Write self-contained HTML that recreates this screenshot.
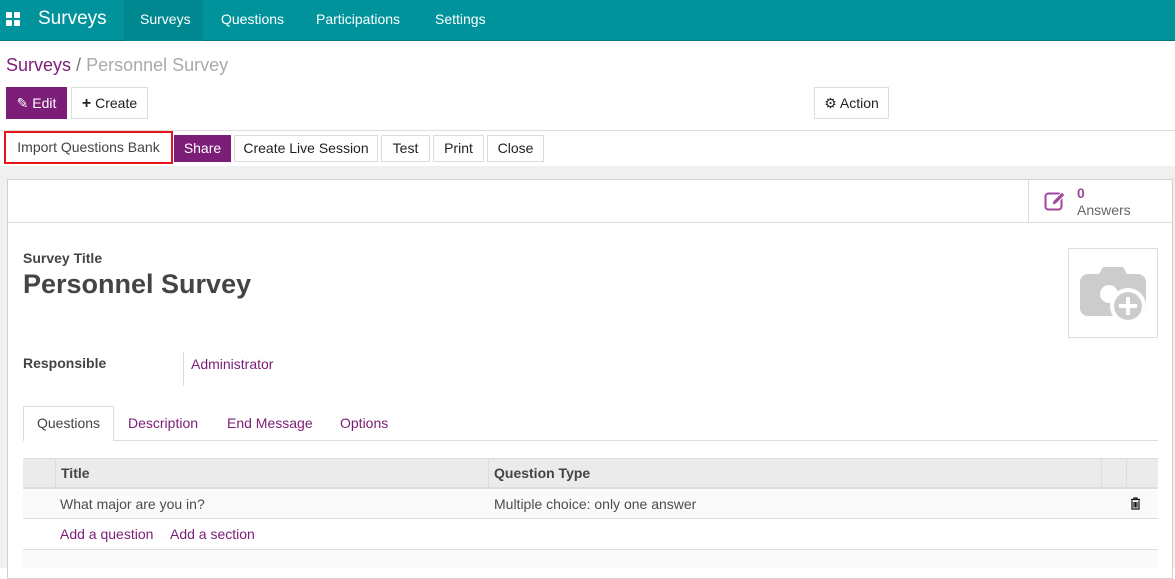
<!DOCTYPE html>
<html><head><meta charset="utf-8"><style>
*{box-sizing:border-box;margin:0;padding:0}
body{width:1175px;height:568px;overflow:hidden;font-family:"Liberation Sans",sans-serif;font-size:14px;color:#4c4c4c;background:#fff;position:relative}
.nav{position:absolute;left:0;top:0;width:1175px;height:41px;background:#00939b;border-bottom:1px solid #00777e;color:#fff}
.nav span{position:absolute;top:0;line-height:38px;font-size:14px}
.abs{position:absolute}
.btn{position:absolute;border:1px solid #dcdcdc;background:#fff;color:#222;font-size:14px;text-align:center;line-height:30px;height:32px}
.pbtn{background:#7c1d77;color:#fff;border-color:#7c1d77}
.purple{color:#7c1d77}
</style></head><body>
<div class="nav">
 <div class="abs" style="left:6px;top:12px;width:6px;height:6px;background:#fff;border-radius:1px"></div>
 <div class="abs" style="left:14px;top:12px;width:6px;height:6px;background:#fff;border-radius:1px"></div>
 <div class="abs" style="left:6px;top:20px;width:6px;height:6px;background:#fff;border-radius:1px"></div>
 <div class="abs" style="left:14px;top:20px;width:6px;height:6px;background:#fff;border-radius:1px"></div>
 <span style="left:38px;font-size:19px">Surveys</span>
 <div class="abs" style="left:124px;top:0;width:79px;height:41px;background:#008890"></div>
 <span style="left:140px">Surveys</span>
 <span style="left:221px">Questions</span>
 <span style="left:316px">Participations</span>
 <span style="left:435px">Settings</span>
</div>
<div class="abs" style="left:6px;top:55px;font-size:18px"><span class="purple">Surveys</span> <span style="color:#777">/</span> <span style="color:#aaa">Personnel Survey</span></div>
<div class="btn pbtn" style="left:6px;top:87px;width:61px">✎ Edit</div>
<div class="btn" style="left:71px;top:87px;width:77px"><b style="font-size:16px">+</b> Create</div>
<div class="btn" style="left:814px;top:87px;width:75px">⚙ Action</div>
<div class="abs" style="left:0;top:130px;width:1175px;height:1px;background:#ddd"></div>
<div class="btn" style="left:4px;top:131px;width:169px;border:2px solid #e8141b;height:33px;line-height:29px;color:#444">Import Questions Bank</div>
<div class="btn pbtn" style="left:174px;top:135px;width:57px;height:27px;line-height:25px">Share</div>
<div class="btn" style="left:234px;top:135px;width:144px;height:27px;line-height:25px">Create Live Session</div>
<div class="btn" style="left:381px;top:135px;width:49px;height:27px;line-height:25px">Test</div>
<div class="btn" style="left:433px;top:135px;width:51px;height:27px;line-height:25px">Print</div>
<div class="btn" style="left:487px;top:135px;width:57px;height:27px;line-height:25px">Close</div>
<div class="abs" style="left:0;top:166px;width:1175px;height:402px;background:#f0f0f0"></div>
<div class="abs" style="left:7px;top:179px;width:1166px;height:400px;background:#fff;border:1px solid #d0d0d0"></div>
<div class="abs" style="left:8px;top:222px;width:1164px;height:1px;background:#ddd"></div>
<div class="abs" style="left:1028px;top:180px;width:1px;height:42px;background:#ddd"></div>
<svg class="abs" style="left:1044px;top:190px" width="24" height="22" viewBox="0 0 24 22"><rect x="1.5" y="3.5" width="16" height="16" rx="3" fill="none" stroke="#a0469c" stroke-width="2"/><path d="M8 15l1-4 9-9 3 3-9 9z" fill="#a0469c" stroke="#fff" stroke-width="1"/></svg>
<div class="abs" style="left:1077px;top:185px;font-size:14px;font-weight:bold;color:#a0469c">0</div>
<div class="abs" style="left:1077px;top:202px;font-size:14px;color:#666">Answers</div>
<div class="abs" style="left:23px;top:250px;font-size:14px;font-weight:bold;color:#444">Survey Title</div>
<div class="abs" style="left:23px;top:269px;font-size:27px;font-weight:bold;color:#444">Personnel Survey</div>
<div class="abs" style="left:1068px;top:248px;width:90px;height:90px;border:1px solid #ddd"></div>
<svg class="abs" style="left:1078px;top:264px" width="70" height="62" viewBox="0 0 70 62"><rect x="2" y="10" width="66" height="42" rx="8" fill="#ccc"/><path d="M20 12l5-9h20l5 9z" fill="#ccc"/><circle cx="31" cy="30" r="9" fill="#fff"/><circle cx="50" cy="42" r="18" fill="#fff"/><circle cx="50" cy="42" r="14" fill="#ccc"/><path d="M50 33v18M41 42h18" stroke="#fff" stroke-width="4"/></svg>
<div class="abs" style="left:23px;top:355px;font-weight:bold;color:#444">Responsible</div>
<div class="abs" style="left:183px;top:352px;width:1px;height:34px;background:#ddd"></div>
<div class="abs purple" style="left:191px;top:356px">Administrator</div>
<div class="abs" style="left:23px;top:440px;width:1135px;height:1px;background:#ddd"></div>
<div class="abs" style="left:23px;top:406px;width:91px;height:35px;background:#fff;border:1px solid #ddd;border-bottom:none"></div>
<div class="abs" style="left:37px;top:415px;color:#444">Questions</div>
<div class="abs purple" style="left:128px;top:415px">Description</div>
<div class="abs purple" style="left:227px;top:415px">End Message</div>
<div class="abs purple" style="left:340px;top:415px">Options</div>
<div class="abs" style="left:23px;top:458px;width:1135px;height:31px;background:#ebebeb;border-top:1px solid #ddd;border-bottom:2px solid #ddd"></div>
<div class="abs" style="left:55px;top:459px;width:1px;height:29px;background:#ddd"></div>
<div class="abs" style="left:488px;top:459px;width:1px;height:29px;background:#ddd"></div>
<div class="abs" style="left:1101px;top:459px;width:1px;height:29px;background:#ddd"></div>
<div class="abs" style="left:1126px;top:459px;width:1px;height:29px;background:#ddd"></div>
<div class="abs" style="left:61px;top:465px;font-weight:bold;color:#444">Title</div>
<div class="abs" style="left:494px;top:465px;font-weight:bold;color:#444">Question Type</div>
<div class="abs" style="left:23px;top:490px;width:1135px;height:29px;background:#fafafa;border-bottom:1px solid #ddd"></div>
<div class="abs" style="left:60px;top:496px">What major are you in?</div>
<div class="abs" style="left:494px;top:496px">Multiple choice: only one answer</div>
<svg class="abs" style="left:1130px;top:497px" width="11" height="13" viewBox="0 0 11 13"><path d="M1 2.5h9M4 2.5V1h3v1.5M2 3.5v8.5h7V3.5M4 5v5.5M5.5 5v5.5M7 5v5.5" fill="none" stroke="#111" stroke-width="1.2"/></svg>
<div class="abs purple" style="left:60px;top:526px">Add a question</div>
<div class="abs purple" style="left:170px;top:526px">Add a section</div>
<div class="abs" style="left:23px;top:549px;width:1135px;height:19px;background:#fafafa;border-top:1px solid #ddd"></div>
</body></html>
